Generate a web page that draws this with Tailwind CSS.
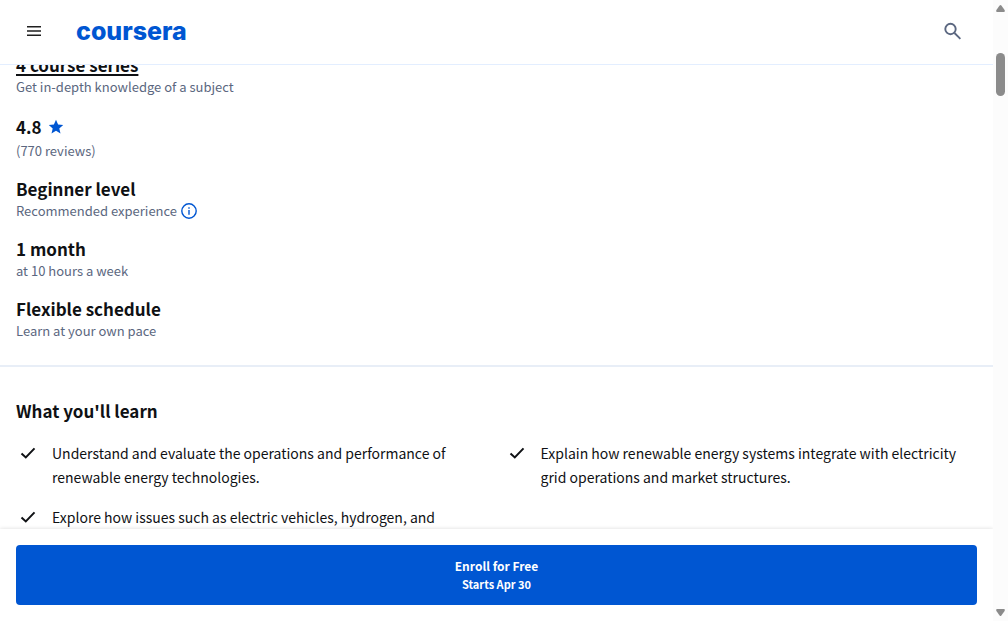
<!DOCTYPE html>
<html lang="en">
<head>
<meta charset="utf-8">
<meta name="viewport" content="width=device-width, initial-scale=1">
<title>Renewable Energy Specialization | Coursera</title>
<script src="https://cdn.jsdelivr.net/npm/@tailwindcss/browser@4"></script>
</head>
<body class="flex h-screen overflow-hidden bg-white font-['Noto_Sans_CJK_SC',sans-serif] text-[#0f1114]">
<div class="flex min-w-0 flex-1 flex-col overflow-hidden">
  <header class="z-10 flex h-[65px] shrink-0 items-center border-b border-[#e3eeff] bg-white pr-8 pb-0.5 pl-[26px]">
    <button type="button" aria-label="Open menu" class="flex h-8 w-4 items-center justify-center">
      <svg class="h-4 w-4 shrink-0" viewBox="0 0 16 16" fill="none" stroke="#1f1f1f" stroke-width="1.5" aria-hidden="true"><path d="M1 3.7H15M1 8H15M1 12.2H15"/></svg>
    </button>
    <a href="#" class="ml-[34px] font-['Inter',sans-serif] text-[25px] leading-8 font-extrabold text-[#0056d2]">coursera</a>
    <button type="button" aria-label="Search" class="ml-auto flex h-8 w-[18px] items-center justify-center">
      <svg class="h-[18px] w-[18px] shrink-0" viewBox="0 0 18 18" fill="none" stroke="#5b6780" stroke-width="1.9" aria-hidden="true"><circle cx="7.5" cy="7" r="5.2"/><path d="M11.5 11L17.4 16.9"/></svg>
    </button>
  </header>

  <main class="min-h-0 flex-1 overflow-hidden">
    <section class="-mt-3 border-b-2 border-[#e8eef7] px-4 pb-6">
      <div>
        <h2 class="text-[17px] leading-6 font-bold"><a href="#" class="underline decoration-2 underline-offset-2">4 course series</a></h2>
        <p class="text-[13px] leading-5 text-[#5b6780]">Get in-depth knowledge of a subject</p>
      </div>
      <div class="mt-[18px]">
        <h2 class="flex items-center gap-1.5 text-[17px] leading-6 font-bold">4.8
          <svg class="h-4 w-4" viewBox="0 0 16 16" fill="#0056d2" aria-hidden="true"><path d="M8 .8L10.1 5.6L15.2 6L11.3 9.4L12.5 14.6L8 11.8L3.5 14.6L4.7 9.4L.8 6L5.9 5.6Z"/></svg>
        </h2>
        <p class="mt-0.5 text-[13px] leading-5 text-[#5b6780]">(770 reviews)</p>
      </div>
      <div class="mt-4">
        <h2 class="text-[17px] leading-6 font-bold">Beginner level</h2>
        <div class="flex items-center gap-1 text-[13px] leading-5 text-[#5b6780]">
          <p>Recommended experience</p>
          <button type="button" aria-label="More information" class="h-4 w-4">
            <svg class="h-4 w-4" viewBox="0 0 16 16" fill="none" stroke="#0056d2" stroke-width="1.4" aria-hidden="true"><circle cx="8" cy="8" r="7.2"/><path d="M8 7V11.8M8 4.2V5.7"/></svg>
          </button>
        </div>
      </div>
      <div class="mt-4">
        <h2 class="text-[17px] leading-6 font-bold">1 month</h2>
        <p class="text-[13px] leading-5 text-[#5b6780]">at 10 hours a week</p>
      </div>
      <div class="mt-4">
        <h2 class="text-[17px] leading-6 font-bold">Flexible schedule</h2>
        <p class="text-[13px] leading-5 text-[#5b6780]">Learn at your own pace</p>
      </div>
    </section>

    <section class="px-4 pt-8">
      <h2 class="text-[17px] leading-6 font-bold">What you'll learn</h2>
      <ul class="mt-[18px] grid grid-cols-2 gap-4 text-[14px] leading-6">
        <li class="flex gap-3">
          <svg class="h-6 w-6 shrink-0" viewBox="0 0 24 24" fill="none" stroke="#0f1114" stroke-width="2" aria-hidden="true"><path d="M5.5 12.4L9.8 16.4L18.5 7.4"/></svg>
          <p>Understand and evaluate the operations and performance of renewable energy technologies.</p>
        </li>
        <li class="flex gap-3">
          <svg class="h-6 w-6 shrink-0" viewBox="0 0 24 24" fill="none" stroke="#0f1114" stroke-width="2" aria-hidden="true"><path d="M5.5 12.4L9.8 16.4L18.5 7.4"/></svg>
          <p>Explain how renewable energy systems integrate with electricity grid operations and market structures.</p>
        </li>
        <li class="flex gap-3">
          <svg class="h-6 w-6 shrink-0" viewBox="0 0 24 24" fill="none" stroke="#0f1114" stroke-width="2" aria-hidden="true"><path d="M5.5 12.4L9.8 16.4L18.5 7.4"/></svg>
          <p>Explore how issues such as electric vehicles, hydrogen, and</p>
        </li>
      </ul>
    </section>
  </main>

  <footer class="z-10 shrink-0 bg-white p-4 shadow-[0_0_4px_rgba(0,0,0,0.15)]">
    <button type="button" class="flex h-[60px] w-full flex-col items-center justify-center rounded bg-[#0056d2] font-bold text-white">
      <span class="text-[12px] leading-[18px]">Enroll for Free</span>
      <span class="text-[11px] leading-[18px]">Starts Apr 30</span>
    </button>
  </footer>
</div>

<div class="flex w-[15px] shrink-0 flex-col items-center bg-[#fcfcfc] pt-1 pb-1" aria-hidden="true">
  <svg class="h-2 w-[9px] shrink-0" viewBox="0 0 9 8" fill="#8b8b8b"><path d="M3.6 1.4Q4.5 .4 5.4 1.4L8.6 6Q9.2 8 8 8H1Q-.2 8 .4 6Z"/></svg>
  <div class="mt-[41px] h-[43px] w-[9px] rounded-full bg-[#8b8b8b]"></div>
  <svg class="mt-auto h-2 w-[9px] shrink-0" viewBox="0 0 9 8" fill="#8b8b8b"><path d="M3.6 6.6Q4.5 7.6 5.4 6.6L8.6 2Q9.2 0 8 0H1Q-.2 0 .4 2Z"/></svg>
</div>
</body>
</html>
